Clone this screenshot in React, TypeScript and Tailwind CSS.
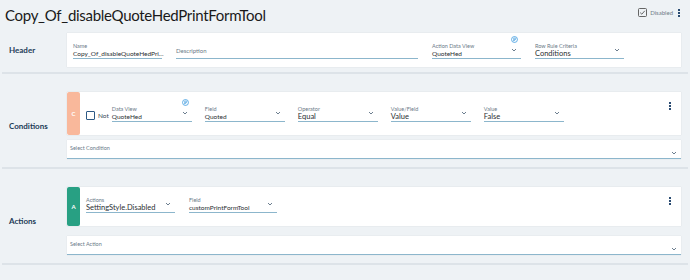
import { ReactNode } from 'react';

const font = { fontFamily: 'Lato, "Open Sans", sans-serif' };

function Chevron() {
  return (
    <svg width="6" height="4" viewBox="0 0 6 4" className="text-[#5b6f82]">
      <path d="M1 1l2 2 2-2" fill="none" stroke="currentColor" strokeWidth="0.9" />
    </svg>
  );
}

function Info() {
  return (
    <svg width="7" height="7" viewBox="0 0 8 8">
      <circle cx="4" cy="4" r="3.4" fill="none" stroke="#3d9be0" strokeWidth="0.9" />
      <path d="M3.2 2.3h1.4a1 1 0 0 1 0 2H3.5v1.6M3.2 2.3v3.6" fill="none" stroke="#3d9be0" strokeWidth="0.8" />
    </svg>
  );
}

function Kebab() {
  return (
    <div className="flex flex-col gap-[1px]">
      <span className="w-[2px] h-[2px] bg-[#2b4c72]" />
      <span className="w-[2px] h-[2px] bg-[#2b4c72]" />
      <span className="w-[2px] h-[2px] bg-[#2b4c72]" />
    </div>
  );
}

function Field({
  w,
  label,
  value,
  info,
  big,
  chevron = true,
}: {
  w: string;
  label: string;
  value: string;
  info?: boolean;
  big?: boolean;
  chevron?: boolean;
}) {
  return (
    <div className={`relative ${w} h-[17px] border-b border-[#8cb6cc] shrink-0`}>
      <p className="text-[5.5px] leading-[6px] text-[#6b7a88] pt-[1px]">{label}</p>
      <p
        className={`${big ? 'text-[7.5px]' : 'text-[6.5px]'} leading-[9px] text-[#2b2f33] whitespace-nowrap ${chevron ? 'pr-[12px]' : ''}`}
      >
        {value}
      </p>
      {info && (
        <div className="absolute right-[3px] -top-[6px]">
          <Info />
        </div>
      )}
      {chevron && (
        <div className="absolute right-[4px] top-[6px]">
          <Chevron />
        </div>
      )}
    </div>
  );
}

function Badge({ letter, color }: { letter: string; color: string }) {
  return (
    <div
      className={`${color} w-[13px] self-stretch rounded-[2px] flex items-center justify-center text-white text-[6px] font-bold shrink-0`}
    >
      {letter}
    </div>
  );
}

function SelectBox({ label }: { label: string }) {
  return (
    <div className="relative h-[19px] bg-white border-b border-[#8cb6cc] shadow-[0_0_1px_rgba(0,0,0,0.12)]">
      <p className="text-[5.5px] text-[#6b7a88] pl-[3px] pt-[4px]">{label}</p>
      <div className="absolute right-[4px] top-[11px]">
        <Chevron />
      </div>
    </div>
  );
}

function Section({ title, children, className }: { title: string; children: ReactNode; className?: string }) {
  return (
    <div className={`flex items-center ${className ?? ''}`}>
      <p className="w-[67px] pl-[9px] text-[8px] font-bold text-[#1c3b57] shrink-0">{title}</p>
      <div className="flex-1 pr-[9px]">{children}</div>
    </div>
  );
}

function Divider() {
  return <div className="mx-[2px] h-[2px] bg-[#dde3e8]" />;
}

export default function App() {
  return (
    <div className="w-[690px] h-[280px] bg-[#eef2f5] overflow-hidden" style={font}>
      <div className="flex items-center justify-between h-[33px] pl-[5px] pr-[10px] pb-[2px]">
        <h1 className="text-[15px] tracking-[-0.3px] text-[#1a1a1a] leading-none">
          Copy_Of_disableQuoteHedPrintFormTool
        </h1>
        <div className="flex items-center gap-[3px] -mt-[6px]">
          <svg width="9" height="9" viewBox="0 0 9 9">
            <rect x="0.5" y="0.5" width="8" height="8" rx="1" fill="none" stroke="#555" strokeWidth="0.9" />
            <path d="M2.2 4.6l1.6 1.6 3-3.4" fill="none" stroke="#555" strokeWidth="0.9" />
          </svg>
          <span className="text-[6px] text-[#707c87]">Disabled</span>
          <div className="ml-[2px]">
            <Kebab />
          </div>
        </div>
      </div>

      <Section title="Header">
        <div className="h-[34px] bg-white shadow-[0_0_1px_rgba(0,0,0,0.15)] flex items-start gap-[14px] pl-[6px] pt-[9px]">
          <Field w="w-[89px]" label="Name" value="Copy_Of_disableQuoteHedPri..." chevron={false} />
          <div className="w-[242px] h-[17px] border-b border-[#8cb6cc] shrink-0">
            <p className="text-[6px] text-[#6b7a88] pt-[4px]">Description</p>
          </div>
          <Field w="w-[89px]" label="Action Data View" value="QuoteHed" info />
          <Field w="w-[89px]" label="Row Rule Criteria" value="Conditions" big />
        </div>
      </Section>
      <div className="mt-[5px]">
        <Divider />
      </div>

      <Section title="Conditions" className="mt-[18px]">
        <div className="h-[43px] bg-white shadow-[0_0_1px_rgba(0,0,0,0.15)] flex items-start">
          <Badge letter="C" color="bg-[#f9b89b]" />
          <div className="flex items-center mt-[19px] ml-[6px]">
            <span className="w-[9px] h-[9px] border-[1.5px] border-[#2d5a86] rounded-[1px]" />
            <span className="text-[6.5px] text-[#3b4a57] ml-[3px]">Not</span>
          </div>
          <div className="flex gap-[13px] ml-[3px] mt-[13px]">
            <Field w="w-[80px]" label="Data View" value="QuoteHed" info />
            <Field w="w-[80px]" label="Field" value="Quoted" />
            <Field w="w-[80px]" label="Operator" value="Equal" big />
            <Field w="w-[80px]" label="Value/Field" value="Value" big />
            <Field w="w-[80px]" label="Value" value="False" big />
          </div>
          <div className="ml-auto mr-[10px] mt-[10px]">
            <Kebab />
          </div>
        </div>
        <div className="mt-[5px]">
          <SelectBox label="Select Condition" />
        </div>
      </Section>
      <div className="mt-[8px]">
        <Divider />
      </div>

      <Section title="Actions" className="mt-[18px]">
        <div className="h-[39px] bg-white shadow-[0_0_1px_rgba(0,0,0,0.15)] flex items-start">
          <Badge letter="A" color="bg-[#28a083]" />
          <div className="flex gap-[14px] ml-[6px] mt-[9px]">
            <Field w="w-[89px]" label="Actions" value="SettingStyle.Disabled" big />
            <Field w="w-[88px]" label="Field" value="customPrintFormTool" />
          </div>
          <div className="ml-auto mr-[10px] mt-[10px]">
            <Kebab />
          </div>
        </div>
        <div className="mt-[10px]">
          <SelectBox label="Select Action" />
        </div>
      </Section>
      <div className="mt-[8px]">
        <Divider />
      </div>
    </div>
  );
}
